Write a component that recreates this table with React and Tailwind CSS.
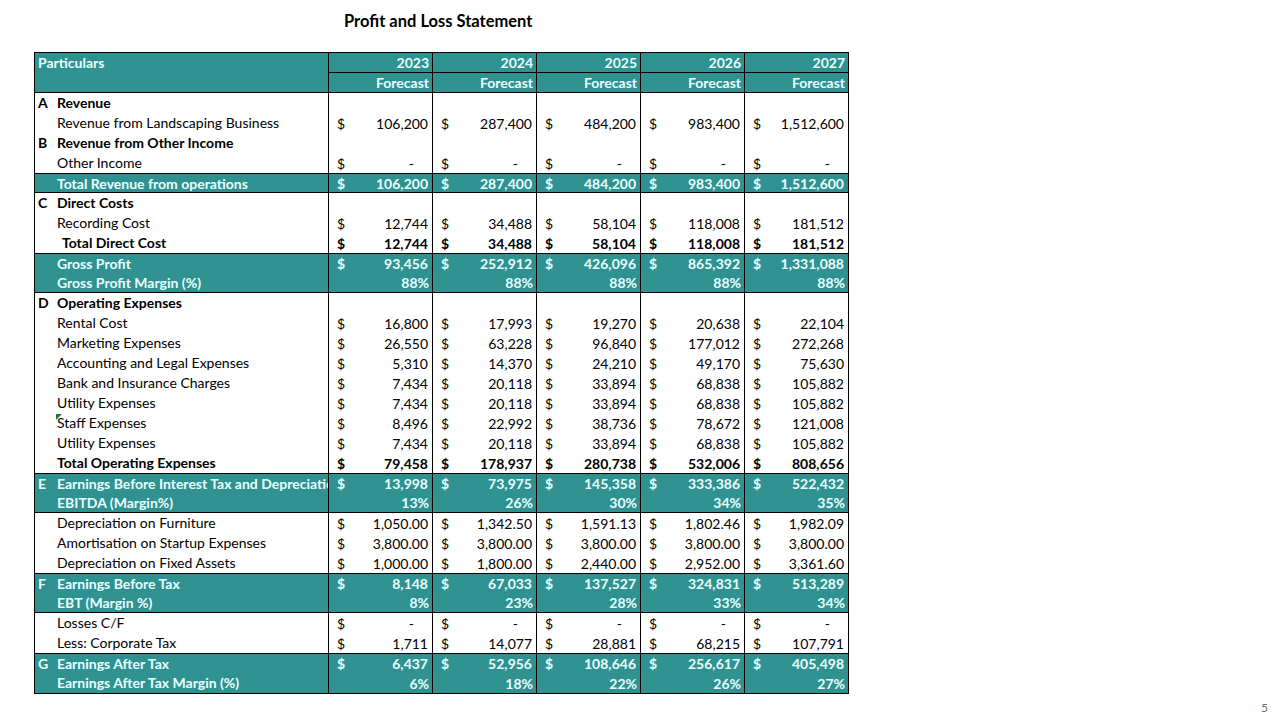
import React from 'react';

const years = ['2023', '2024', '2025', '2026', '2027'];

// kind: section | item | total | teal
const rows = [
  { kind: 'section', letter: 'A', label: 'Revenue' },
  { kind: 'item', label: 'Revenue from Landscaping Business', v: ['106,200', '287,400', '484,200', '983,400', '1,512,600'] },
  { kind: 'section', letter: 'B', label: 'Revenue from Other Income' },
  { kind: 'item', label: 'Other Income', v: ['-', '-', '-', '-', '-'] },
  { kind: 'teal', label: 'Total Revenue from operations', v: ['106,200', '287,400', '484,200', '983,400', '1,512,600'], top: true, bottom: true },
  { kind: 'section', letter: 'C', label: 'Direct Costs' },
  { kind: 'item', label: 'Recording Cost', v: ['12,744', '34,488', '58,104', '118,008', '181,512'] },
  { kind: 'total', label: 'Total Direct Cost', indent: true, v: ['12,744', '34,488', '58,104', '118,008', '181,512'] },
  { kind: 'teal', label: 'Gross Profit', v: ['93,456', '252,912', '426,096', '865,392', '1,331,088'], top: true },
  { kind: 'teal', label: 'Gross Profit Margin (%)', pct: ['88%', '88%', '88%', '88%', '88%'], bottom: true },
  { kind: 'section', letter: 'D', label: 'Operating Expenses' },
  { kind: 'item', label: 'Rental Cost', v: ['16,800', '17,993', '19,270', '20,638', '22,104'] },
  { kind: 'item', label: 'Marketing Expenses', v: ['26,550', '63,228', '96,840', '177,012', '272,268'] },
  { kind: 'item', label: 'Accounting and Legal Expenses', v: ['5,310', '14,370', '24,210', '49,170', '75,630'] },
  { kind: 'item', label: 'Bank and Insurance Charges', v: ['7,434', '20,118', '33,894', '68,838', '105,882'] },
  { kind: 'item', label: 'Utility Expenses', v: ['7,434', '20,118', '33,894', '68,838', '105,882'] },
  { kind: 'item', label: 'Staff Expenses', flag: true, v: ['8,496', '22,992', '38,736', '78,672', '121,008'] },
  { kind: 'item', label: 'Utility Expenses', v: ['7,434', '20,118', '33,894', '68,838', '105,882'] },
  { kind: 'total', label: 'Total Operating Expenses', v: ['79,458', '178,937', '280,738', '532,006', '808,656'] },
  { kind: 'teal', letter: 'E', label: 'Earnings Before Interest Tax and Depreciation', v: ['13,998', '73,975', '145,358', '333,386', '522,432'], top: true },
  { kind: 'teal', label: 'EBITDA (Margin%)', pct: ['13%', '26%', '30%', '34%', '35%'], bottom: true },
  { kind: 'item', label: 'Depreciation on Furniture', v: ['1,050.00', '1,342.50', '1,591.13', '1,802.46', '1,982.09'] },
  { kind: 'item', label: 'Amortisation on Startup Expenses', v: ['3,800.00', '3,800.00', '3,800.00', '3,800.00', '3,800.00'] },
  { kind: 'item', label: 'Depreciation on Fixed Assets', v: ['1,000.00', '1,800.00', '2,440.00', '2,952.00', '3,361.60'] },
  { kind: 'teal', letter: 'F', label: 'Earnings Before Tax', v: ['8,148', '67,033', '137,527', '324,831', '513,289'], top: true },
  { kind: 'teal', label: 'EBT (Margin %)', pct: ['8%', '23%', '28%', '33%', '34%'], bottom: true },
  { kind: 'item', label: 'Losses C/F', v: ['-', '-', '-', '-', '-'] },
  { kind: 'item', label: 'Less: Corporate Tax', v: ['1,711', '14,077', '28,881', '68,215', '107,791'] },
  { kind: 'teal', letter: 'G', label: 'Earnings After Tax', v: ['6,437', '52,956', '108,646', '256,617', '405,498'], top: true },
  { kind: 'teal', label: 'Earnings After Tax Margin (%)', pct: ['6%', '18%', '22%', '26%', '27%'] },
];

const ValueCell = ({ value, pct }) => {
  if (pct) {
    return (
      <div className="w-[104px] border-l border-black flex items-center justify-end pr-[3px]">{pct}</div>
    );
  }
  if (!value) {
    return <div className="w-[104px] border-l border-black"></div>;
  }
  const dash = value === '-';
  return (
    <div className="w-[104px] border-l border-black flex items-center justify-between pl-[8px] pr-[4px]">
      <span>$</span>
      <span className={dash ? 'pr-[14px]' : ''}>{value}</span>
    </div>
  );
};

const Row = ({ row }) => {
  const teal = row.kind === 'teal';
  const bold = row.kind !== 'item';
  return (
    <div
      className={
        'flex h-[20px] leading-[19px] ' +
        (teal ? 'bg-[#2f9291] text-[#eaffff] ' : 'bg-white text-black ') +
        (bold ? 'font-bold ' : '') +
        (row.top ? 'border-t border-black ' : '') +
        (row.bottom ? 'border-b border-black ' : '')
      }
    >
      <div className="w-[293px] flex shrink-0 overflow-hidden whitespace-nowrap relative">
        <span className="w-[22px] pl-[3px] shrink-0">{row.letter || ''}</span>
        <span className={row.indent ? 'pl-[5px]' : ''}>{row.label}</span>
        {row.flag && (
          <span className="absolute left-[21px] top-[1px] w-0 h-0 border-t-[6px] border-t-[#1e7b2e] border-r-[6px] border-r-transparent"></span>
        )}
      </div>
      {years.map((y, i) => (
        <ValueCell key={y} value={row.v ? row.v[i] : null} pct={row.pct ? row.pct[i] : null} />
      ))}
    </div>
  );
};

export default function App() {
  return (
    <div className="w-[1280px] h-[720px] bg-white relative font-['Lato',sans-serif] text-[14px] text-black">
      <div className="pt-[10px] pl-[344px] h-[52px]">
        <h1 className="font-bold text-[16.5px] leading-[22px]">Profit and Loss Statement</h1>
      </div>
      <div className="ml-[34px] w-[815px] border border-black">
        <div className="flex bg-[#2f9291] text-[#eaffff] font-bold border-b border-black">
          <div className="w-[293px] h-[39px] pl-[3px] leading-[20px]">Particulars</div>
          {years.map((y) => (
            <div key={y} className="w-[104px] border-l border-black">
              <div className="h-[20px] leading-[20px] text-right pr-[3px] border-b border-black">{y}</div>
              <div className="h-[19px] leading-[19px] text-right pr-[3px]">Forecast</div>
            </div>
          ))}
        </div>
        {rows.map((row, i) => (
          <Row key={i} row={row} />
        ))}
      </div>
      <div className="absolute right-[12px] bottom-[3px] text-[12px] text-gray-500">5</div>
    </div>
  );
}
